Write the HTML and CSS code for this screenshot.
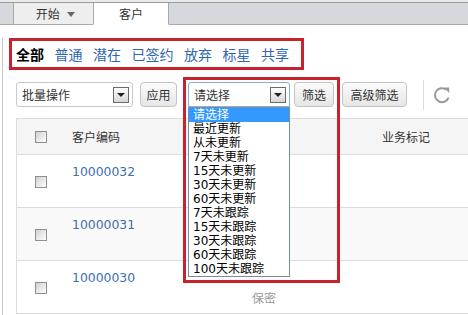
FILE: index.html
```html
<!DOCTYPE html>
<html lang="zh-CN">
<head>
    <meta charset="UTF-8">
    <meta name="viewport" content="width=device-width, initial-scale=1.0">
    <title>客户</title>

    <link rel="stylesheet" href="styles.css">
</head>
<body>

    <div class="tabbar">
        <div class="tab">开始 <span class="caret"></span></div>
        <div class="tab active">客户</div>
    </div>

    <div class="main">
        <div class="types">
            <a class="type current">全部</a>
            <a class="type">普通</a>
            <a class="type">潜在</a>
            <a class="type">已签约</a>
            <a class="type">放弃</a>
            <a class="type">标星</a>
            <a class="type">共享</a>
        </div>

        <div class="toolbar">
            <div class="fake-select batch">
                <span class="label">批量操作</span>
                <span class="arrow"></span>
            </div>
            <button class="btn apply">应用</button>

            <div class="filter-group">
                <div class="fake-select filter open">
                    <span class="label">请选择</span>
                    <span class="arrow"></span>
                </div>
                <button class="btn">筛选</button>

                <ul class="options">
                    <li class="selected">请选择</li>
                    <li>最近更新</li>
                    <li>从未更新</li>
                    <li>7天未更新</li>
                    <li>15天未更新</li>
                    <li>30天未更新</li>
                    <li>60天未更新</li>
                    <li>7天未跟踪</li>
                    <li>15天未跟踪</li>
                    <li>30天未跟踪</li>
                    <li>60天未跟踪</li>
                    <li>100天未跟踪</li>
                </ul>
                <div class="highlight"></div>
            </div>

            <button class="btn advanced">高级筛选</button>
            <span class="sep"></span>
            <svg class="refresh" width="18" height="18" viewBox="0 0 18 18">
                <path d="M15.6 11.5A7 7 0 1 1 13.2 3.6" fill="none" stroke="#9a9a9a" stroke-width="2"/>
                <path d="M10.8 1.6h5.4v5.4z" fill="#9a9a9a"/>
            </svg>
        </div>

        <div class="grid">
            <div class="row head">
                <div class="cell"><span class="check"></span></div>
                <div class="cell">客户编码</div>
                <div class="cell"></div>
                <div class="cell">业务标记</div>
            </div>
            <div class="row">
                <div class="cell"><span class="check"></span></div>
                <div class="cell code">10000032</div>
                <div class="cell"></div>
                <div class="cell"></div>
            </div>
            <div class="row alt">
                <div class="cell"><span class="check"></span></div>
                <div class="cell code">10000031</div>
                <div class="cell"></div>
                <div class="cell"></div>
            </div>
            <div class="row">
                <div class="cell"><span class="check"></span></div>
                <div class="cell code">10000030</div>
                <div class="cell note">保密</div>
                <div class="cell"></div>
            </div>
        </div>
    </div>

</body>
</html>
```

FILE: styles.css
```css
* {
    padding: 0;
    margin: 0;
    box-sizing: border-box;
}

html, body {
    overflow: hidden;
}

body {
    background-color: white;
    color: #333;
    font-family: "Noto Sans CJK SC", sans-serif;
    font-size: 12px;
}

/* tabs */

.tabbar {
    display: flex;
    align-items: flex-end;
    height: 25px;
    padding-left: 13px;
    border-bottom: 1px solid #a9a9a9;
    background: linear-gradient(#e9e9e9 0, #e9e9e9 2px, #9c9c9c 2px, #9c9c9c 3px, #d5d8dc 3px);
}

.tab {
    height: 22px;
    margin-bottom: -1px;
    line-height: 21px;
    text-align: center;
    background-color: #eeeeee;
    border-left: 1px solid #a9a9a9;
    border-bottom: 1px solid #a9a9a9;
    width: 80px;
    padding-left: 4px;
}

.tab.active {
    width: 76px;
    padding-left: 0;
    background-color: white;
    border-right: 1px solid #a9a9a9;
    border-bottom-color: white;
}

.caret {
    display: inline-block;
    margin-left: 5px;
    vertical-align: 2px;
    border-left: 4px solid transparent;
    border-right: 4px solid transparent;
    border-top: 5px solid #666;
}

.main {
    margin-left: 2px;
    border-left: 1px solid #c8c8c8;
    height: 290px;
}

/* customer type filter */

.types {
    display: flex;
    gap: 10.5px;
    width: 295px;
    height: 32px;
    margin: 13px 0 0 6px;
    padding-left: 4px;
    border: 3px solid #c8232c;
    font-size: 14px;
    line-height: 26px;
}

.type {
    color: #2f66ad;
    cursor: pointer;
}

.type.current {
    color: black;
    font-weight: bold;
}

/* toolbar */

.toolbar {
    display: flex;
    align-items: center;
    height: 25px;
    margin-top: 12px;
    padding-left: 13px;
}

.fake-select {
    display: flex;
    align-items: center;
    justify-content: space-between;
    height: 25px;
    padding: 0 3px 0 5px;
    border: 1px solid #c9c9c9;
    border-radius: 3px;
    background-color: white;
}

.fake-select.batch {
    width: 117px;
    margin-right: 7px;
}

.fake-select.filter {
    width: 102px;
    border-color: #86afdc;
    border-radius: 3px 3px 0 0;
}

.arrow {
    width: 16px;
    height: 16px;
    border: 1px solid #6b6b6b;
    background: linear-gradient(#ffffff, #d6d6d6);
    display: flex;
    align-items: center;
    justify-content: center;
}

.arrow::after {
    content: "";
    border-left: 4px solid transparent;
    border-right: 4px solid transparent;
    border-top: 4px solid #222;
}

.btn {
    height: 25px;
    padding: 0;
    white-space: nowrap;
    font-family: inherit;
    font-size: 12px;
    color: #333;
    border: 1px solid #c4c4c4;
    border-radius: 4px;
    background: linear-gradient(#fbfbfb, #e6e6e6);
    cursor: pointer;
}

.btn.apply {
    width: 37px;
    margin-right: 6px;
}

.filter-group {
    position: relative;
    z-index: 2;
    display: flex;
    align-items: center;
    gap: 4px;
    width: 157px;
    height: 25px;
    padding-left: 5px;
    margin-right: 2px;
}

.filter-group .btn {
    width: 40px;
}

.options {
    position: absolute;
    top: 25px;
    left: 5px;
    width: 102px;
    list-style: none;
    background-color: white;
    border: 1px solid #7c8c9c;
    font-family: "DejaVu Sans", "Noto Sans CJK SC", sans-serif;
    font-size: 12px;
    line-height: 14px;
    color: black;
}

.options li {
    padding-left: 4px;
    white-space: nowrap;
}

.options li.selected {
    background-color: #3399ff;
    color: white;
}

.highlight {
    position: absolute;
    top: -5px;
    left: 0;
    width: 157px;
    height: 206px;
    border: 3px solid #c8232c;
    pointer-events: none;
}

.btn.advanced {
    width: 65px;
}

.sep {
    width: 1px;
    height: 30px;
    margin: 0 9px 0 16px;
    background-color: #dddddd;
}

.refresh {
    display: block;
}

/* customer list */

.grid {
    margin: 11px 0 0 13px;
    border-top: 1px solid #dddddd;
    border-left: 1px solid #dddddd;
}

.row {
    display: grid;
    grid-template-columns: 55px 180px 130px 1fr;
    height: 53px;
    border-bottom: 1px solid #dddddd;
}

.row.head {
    height: 36px;
    background-color: #f5f5f5;
    align-items: center;
}

.row.alt {
    background-color: #f9f9f9;
}

.cell {
    line-height: 16px;
    padding-top: 9px;
}

.head .cell {
    padding-top: 0;
}

.check {
    display: block;
    width: 12px;
    height: 12px;
    margin: 12px 0 0 18px;
    border: 1px solid #8f8f8f;
    background: linear-gradient(135deg, #d0d0d0, #ffffff);
}

.head .check {
    margin-top: 0;
}

.code {
    color: #3f6fae;
    font-family: "DejaVu Sans", sans-serif;
    font-size: 12.4px;
}

.note {
    color: #999;
    line-height: 19px;
    padding-top: 27px;
}
```
